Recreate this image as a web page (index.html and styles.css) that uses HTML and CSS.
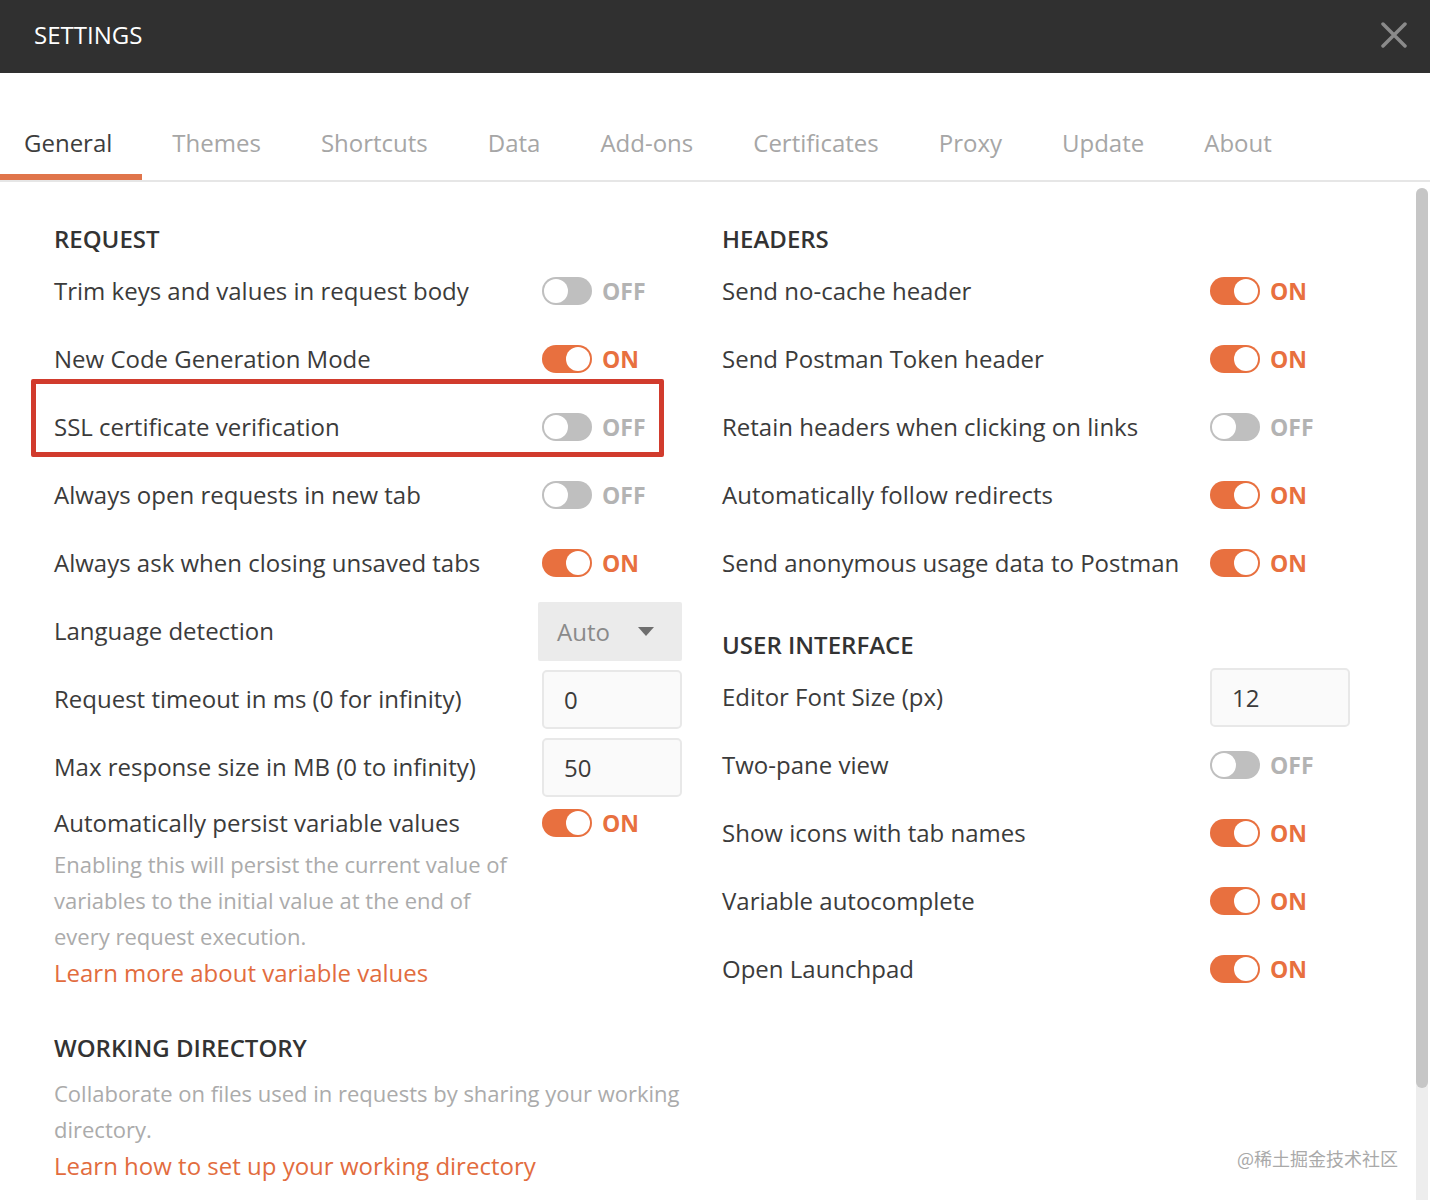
FILE: index.html
```html
<!DOCTYPE html>
<html>
<head>
<meta charset="utf-8">
<link rel="stylesheet" href="styles.css">
</head>
<body>
<div class="header">
  <div class="title">SETTINGS</div>
  <svg class="close" width="26" height="26" viewBox="0 0 26 26"><path d="M2 2 L24 24 M24 2 L2 24" stroke="#8a8a8a" stroke-width="3.5" stroke-linecap="round"/></svg>
</div>
<div class="tabs">
  <div class="tab active">General</div>
  <div class="tab">Themes</div>
  <div class="tab">Shortcuts</div>
  <div class="tab">Data</div>
  <div class="tab">Add-ons</div>
  <div class="tab">Certificates</div>
  <div class="tab">Proxy</div>
  <div class="tab">Update</div>
  <div class="tab">About</div>
</div>
<div class="body">
  <div class="content">
    <div class="col">
      <div class="heading">REQUEST</div>
      <div class="row"><div class="label">Trim keys and values in request body</div><div class="ctrl"><span class="toggle"></span><span class="state">OFF</span></div></div>
      <div class="row"><div class="label">New Code Generation Mode</div><div class="ctrl"><span class="toggle on"></span><span class="state on">ON</span></div></div>
      <div class="row marked"><div class="label">SSL certificate verification</div><div class="ctrl"><span class="toggle"></span><span class="state">OFF</span></div><div class="highlight"></div></div>
      <div class="row"><div class="label">Always open requests in new tab</div><div class="ctrl"><span class="toggle"></span><span class="state">OFF</span></div></div>
      <div class="row"><div class="label">Always ask when closing unsaved tabs</div><div class="ctrl"><span class="toggle on"></span><span class="state on">ON</span></div></div>
      <div class="row"><div class="label">Language detection</div><div class="ctrl"><div class="select"><span>Auto</span><span class="caret"></span></div></div></div>
      <div class="row"><div class="label">Request timeout in ms (0 for infinity)</div><div class="ctrl"><div class="input">0</div></div></div>
      <div class="row"><div class="label">Max response size in MB (0 to infinity)</div><div class="ctrl"><div class="input">50</div></div></div>
      <div class="row short"><div class="label">Automatically persist variable values</div><div class="ctrl"><span class="toggle on"></span><span class="state on">ON</span></div></div>
      <div class="desc">Enabling this will persist the current value of<br>variables to the initial value at the end of<br>every request execution.</div>
      <div class="link">Learn more about variable values</div>
      <div class="heading wd">WORKING DIRECTORY</div>
      <div class="desc">Collaborate on files used in requests by sharing your working<br>directory.</div>
      <div class="link">Learn how to set up your working directory</div>
    </div>
    <div class="col">
      <div class="heading">HEADERS</div>
      <div class="row"><div class="label">Send no-cache header</div><div class="ctrl"><span class="toggle on"></span><span class="state on">ON</span></div></div>
      <div class="row"><div class="label">Send Postman Token header</div><div class="ctrl"><span class="toggle on"></span><span class="state on">ON</span></div></div>
      <div class="row"><div class="label">Retain headers when clicking on links</div><div class="ctrl"><span class="toggle"></span><span class="state">OFF</span></div></div>
      <div class="row"><div class="label">Automatically follow redirects</div><div class="ctrl"><span class="toggle on"></span><span class="state on">ON</span></div></div>
      <div class="row"><div class="label">Send anonymous usage data to Postman</div><div class="ctrl"><span class="toggle on"></span><span class="state on">ON</span></div></div>
      <div class="heading ui">USER INTERFACE</div>
      <div class="row"><div class="label">Editor Font Size (px)</div><div class="ctrl"><div class="input">12</div></div></div>
      <div class="row"><div class="label">Two-pane view</div><div class="ctrl"><span class="toggle"></span><span class="state">OFF</span></div></div>
      <div class="row"><div class="label">Show icons with tab names</div><div class="ctrl"><span class="toggle on"></span><span class="state on">ON</span></div></div>
      <div class="row"><div class="label">Variable autocomplete</div><div class="ctrl"><span class="toggle on"></span><span class="state on">ON</span></div></div>
      <div class="row"><div class="label">Open Launchpad</div><div class="ctrl"><span class="toggle on"></span><span class="state on">ON</span></div></div>
    </div>
  </div>
  <div class="scrollbar"><div class="thumb"></div></div>
</div>
<div class="watermark">@稀土掘金技术社区</div>
</body>
</html>
```

FILE: styles.css
```css
html, body {
  margin: 0;
  padding: 0;
  background: #fff;
}
body {
  font-family: "Open Sans", "Noto Sans CJK SC", sans-serif;
  color: #3b3b3b;
  width: 1430px;
  height: 1200px;
  overflow: hidden;
  position: relative;
}
.header {
  box-sizing: border-box;
  height: 73px;
  background: #303030;
  display: flex;
  align-items: center;
  justify-content: space-between;
  padding: 0 23px 4px 34px;
}
.title {
  color: #fff;
  font-size: 24px;
  line-height: 32px;
}
.tabs {
  display: flex;
  height: 107px;
  border-bottom: 2px solid #e6e6e6;
}
.tab {
  box-sizing: border-box;
  height: 107px;
  padding: 53px 30px 15px;
  font-size: 24px;
  line-height: 34px;
  color: #a6a6a6;
  border-bottom: 6px solid transparent;
}
.tab:first-child {
  padding-left: 24px;
}
.tab.active {
  color: #3d3d3d;
  border-bottom-color: #e0754b;
}
.body {
  display: flex;
  height: 1018px;
}
.content {
  flex: 1;
  display: grid;
  grid-template-columns: 628px 628px;
  column-gap: 40px;
  align-items: start;
  padding: 42px 0 0 54px;
}
.heading {
  font-size: 24px;
  font-weight: 600;
  line-height: 30px;
  color: #333;
  margin-bottom: 3px;
}
.heading.ui {
  margin-top: 33px;
  margin-bottom: 3px;
}
.heading.wd {
  margin-top: 41px;
  margin-bottom: 12px;
}
.row {
  display: flex;
  align-items: center;
  height: 68px;
  position: relative;
}
.row.short {
  height: 44px;
}
.label {
  flex: 0 0 488px;
  font-size: 24px;
  line-height: 32px;
  color: #3b3b3b;
}
.ctrl {
  display: flex;
  align-items: center;
}
.toggle {
  position: relative;
  width: 50px;
  height: 28px;
  border-radius: 14px;
  background: #bfbfbf;
  display: inline-block;
}
.toggle::after {
  content: "";
  position: absolute;
  top: 2px;
  left: 2px;
  width: 24px;
  height: 24px;
  border-radius: 50%;
  background: #fff;
}
.toggle.on {
  background: #e8703f;
}
.toggle.on::after {
  left: auto;
  right: 2px;
}
.state {
  margin-left: 10px;
  font-size: 23px;
  font-weight: 700;
  color: #b3b3b3;
  line-height: 30px;
}
.state.on {
  color: #e8703f;
}
.select {
  margin-left: -4px;
  box-sizing: border-box;
  width: 144px;
  height: 59px;
  background: #ebebeb;
  border-radius: 2px;
  display: flex;
  align-items: center;
  justify-content: space-between;
  padding: 0 28px 0 19px;
  font-size: 24px;
  color: #8a8a8a;
}
.caret {
  width: 0;
  height: 0;
  border-left: 8px solid transparent;
  border-right: 8px solid transparent;
  border-top: 9px solid #6e6e6e;
}
.input {
  box-sizing: border-box;
  width: 140px;
  height: 59px;
  background: #fafafa;
  border: 2px solid #e8e8e8;
  border-radius: 5px;
  padding-left: 20px;
  display: flex;
  align-items: center;
  font-size: 24px;
  color: #3b3b3b;
}
.desc {
  font-size: 22px;
  line-height: 36px;
  color: #ababab;
  margin-top: 1px;
}
.link {
  font-size: 24px;
  line-height: 38px;
  color: #e26c3e;
}
.highlight {
  position: absolute;
  left: -23px;
  top: -14px;
  width: 633px;
  height: 78px;
  box-sizing: border-box;
  border: 5px solid #d13b2d;
  border-radius: 2px;
  pointer-events: none;
}
.scrollbar {
  width: 12px;
  margin: 6px 2px 0 0;
  background: #ededed;
  border-radius: 6px 6px 0 0;
}
.thumb {
  height: 900px;
  background: #c6c6c6;
  border-radius: 6px;
}
.watermark {
  position: absolute;
  right: 32px;
  top: 1145px;
  font-size: 18px;
  color: #a9a9a9;
  font-family: "Noto Sans CJK SC", sans-serif;
}
```
